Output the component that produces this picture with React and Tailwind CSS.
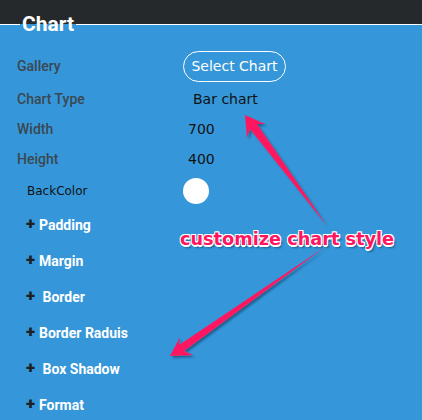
const rows = [
  { label: "Gallery", h: "h-[35px]" },
  { label: "Chart Type", h: "h-[30px]" },
  { label: "Width", h: "h-[30px]" },
  { label: "Height", h: "h-[30px]" },
];

const groups = ["Padding", "Margin", " Border", "Border Raduis", " Box Shadow", "Format"];

const Arrows = () => (
  <svg className="absolute inset-0 pointer-events-none" width="422" height="420" viewBox="0 0 422 420">
    <defs>
      <filter id="sh" x="-20%" y="-20%" width="140%" height="140%">
        <feDropShadow dx="2" dy="2" stdDeviation="1" floodColor="#1d4f7a" floodOpacity="0.8" />
      </filter>
    </defs>
    <polygon
      filter="url(#sh)"
      fill="#ff1560"
      points="245,115 265,124 257,124 327,226 250,129 247,138"
    />
    <polygon
      filter="url(#sh)"
      fill="#ff1560"
      points="170,356 180,337 179,345 325,247 184,351 193,355"
    />
  </svg>
);

export default function App() {
  return (
    <div className="relative w-[422px] h-[420px] overflow-hidden bg-[#3597d9] font-['Roboto',sans-serif]">
      <div className="absolute top-0 left-0 w-full h-[24px] bg-[#26292c]" />
      <fieldset className="relative border-t border-b-0 border-x-0 border-solid border-white m-0 mt-[16px] p-0 min-w-0">
        <legend className="ml-[20px] px-[2px] text-white font-bold text-[21px] leading-[16px]">Chart</legend>
        <div className="pl-[17px] pt-[17px]">
          {rows.map((r, i) => (
            <div key={r.label} className={`flex items-center ${r.h}`}>
              <div className="w-[166px] text-[14px] font-medium text-[#3b4751]">{r.label}</div>
              {i === 0 && (
                <button className="h-[31px] w-[103px] rounded-full border border-white text-white text-[14px] font-['DejaVu_Sans',sans-serif]">
                  Select Chart
                </button>
              )}
              {i === 1 && <div className="pl-[10px] text-[14px] text-[#111] font-['DejaVu_Sans',sans-serif]">Bar chart</div>}
              {i === 2 && <div className="pl-[5px] text-[14px] text-[#111] font-['DejaVu_Sans',sans-serif]">700</div>}
              {i === 3 && <div className="pl-[5px] text-[14px] text-[#111] font-['DejaVu_Sans',sans-serif]">400</div>}
            </div>
          ))}
          <div className="flex items-center h-[33px]">
            <div className="w-[166px] pl-[10px] text-[12px] text-[#111] font-['DejaVu_Sans',sans-serif]">BackColor</div>
            <div className="w-[26px] h-[26px] rounded-full bg-white" />
          </div>
          <div className="flex flex-col pl-[9px]">
            {groups.map((g) => (
              <div key={g} className="flex items-center h-[36px]">
                <span className="text-[#1e2226] font-black text-[17px] w-[13px] leading-none -mt-[4px]">+</span>
                <span className="text-white font-bold text-[14px] whitespace-pre">{g}</span>
              </div>
            ))}
          </div>
        </div>
      </fieldset>
      <div className="absolute left-[180px] top-[226px] text-[#ff1560] font-bold text-[17.7px] font-['DejaVu_Sans',sans-serif] [text-shadow:1px_1px_0_#fff,-1px_-1px_0_#fff,1px_-1px_0_#fff,-1px_1px_0_#fff,0_1.5px_0_#fff,0_-1.5px_0_#fff,2px_3px_2px_rgba(20,60,100,0.6)]">
        customize chart style
      </div>
      <Arrows />
    </div>
  );
}
